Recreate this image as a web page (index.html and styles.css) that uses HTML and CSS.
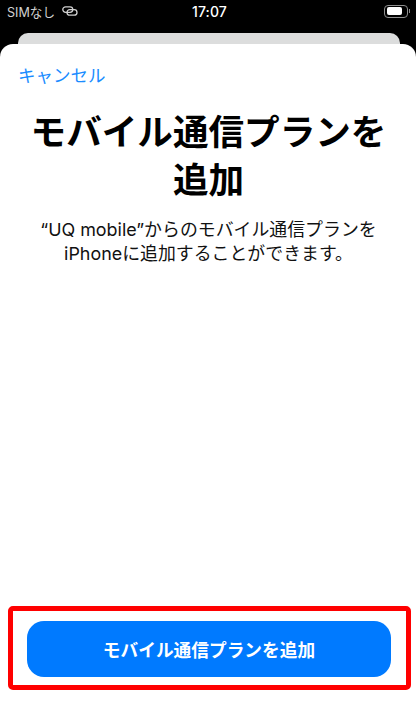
FILE: index.html
```html
<!DOCTYPE html>
<html lang="ja">
<head>
<meta charset="utf-8">
<title>モバイル通信プランを追加</title>
<link rel="stylesheet" href="styles.css">
</head>
<body>
<div class="screen">
  <header class="status">
    <div class="status-left">
      <span>SIMなし</span>
      <svg class="link-icon" viewBox="0 0 16 10" width="16" height="10" aria-hidden="true">
        <rect x="0.8" y="0.8" width="10" height="5.6" rx="2.8" fill="none" stroke="#d0d0d0" stroke-width="1.3"/>
        <rect x="5" y="3.6" width="10" height="5.6" rx="2.8" fill="none" stroke="#d0d0d0" stroke-width="1.3"/>
      </svg>
    </div>
    <div class="status-time">17:07</div>
    <div class="status-right">
      <div class="battery"><div class="battery-fill"></div></div>
      <div class="battery-cap"></div>
    </div>
  </header>
  <div class="back-sheet"></div>
  <main class="sheet">
    <a class="cancel">キャンセル</a>
    <h1 class="title">モバイル通信プランを<br>追加</h1>
    <p class="desc">“UQ mobile”からのモバイル通信プランを<br>iPhoneに追加することができます。</p>
    <div class="spacer"></div>
    <div class="highlight">
      <button class="add-btn">モバイル通信プランを追加</button>
    </div>
  </main>
</div>
</body>
</html>
```

FILE: styles.css
```css
html, body {
  margin: 0;
  padding: 0;
  background: #000;
}
.screen {
  width: 416px;
  height: 716px;
  display: flex;
  flex-direction: column;
  overflow: hidden;
  background: #000;
  font-family: Inter, "Noto Sans CJK JP", sans-serif;
}
.status {
  height: 33px;
  flex: none;
  display: grid;
  grid-template-columns: 1fr auto 1fr;
  align-items: center;
  padding: 0 6px 11px 7px;
  box-sizing: border-box;
  color: #fff;
}
.status-left {
  display: flex;
  align-items: center;
  gap: 7px;
  font-size: 12.6px;
  color: #d0d0d0;
}
.status-time {
  font-size: 14px;
  font-weight: 500;
  letter-spacing: 0.1px;
  margin-left: 2px;
}
.status-right {
  display: flex;
  align-items: center;
  justify-content: flex-end;
  gap: 1px;
}
.battery {
  width: 24px;
  height: 13px;
  box-sizing: border-box;
  border: 1.5px solid #8f8f8f;
  border-radius: 4px;
  padding: 1.5px;
}
.battery-fill {
  width: 15px;
  height: 100%;
  background: #fff;
  border-radius: 2px;
}
.battery-cap {
  width: 1px;
  height: 4px;
  background: #8a8a8a;
}
.back-sheet {
  flex: none;
  height: 11px;
  margin: 0 16px 0 18px;
  background: #dcdddd;
  border-radius: 10px 10px 0 0;
}
.sheet {
  flex: 1;
  display: flex;
  flex-direction: column;
  background: #fff;
  border-radius: 13px 13px 0 0;
  padding: 21px 5px 26px 8px;
}
.cancel {
  align-self: flex-start;
  margin-left: 10px;
  font-size: 17.5px;
  line-height: 22px;
  color: #1a8cff;
}
.title {
  margin: 22px 2px 0 0;
  text-align: center;
  font-size: 35.6px;
  line-height: 48px;
  font-weight: 700;
  color: #000;
}
.desc {
  margin: 13px 2px 0 0;
  text-align: center;
  font-size: 17.9px;
  line-height: 24px;
  color: #111;
}
.spacer {
  flex: 1;
}
.highlight {
  height: 84px;
  box-sizing: border-box;
  border: 5px solid #f00;
  border-radius: 5px;
  padding: 10px 15px 8px 14px;
}
.add-btn {
  display: block;
  width: 100%;
  height: 100%;
  border: 0;
  border-radius: 17px;
  background: #007aff;
  color: #fff;
  font-family: inherit;
  font-size: 17.7px;
  font-weight: 600;
}
```
